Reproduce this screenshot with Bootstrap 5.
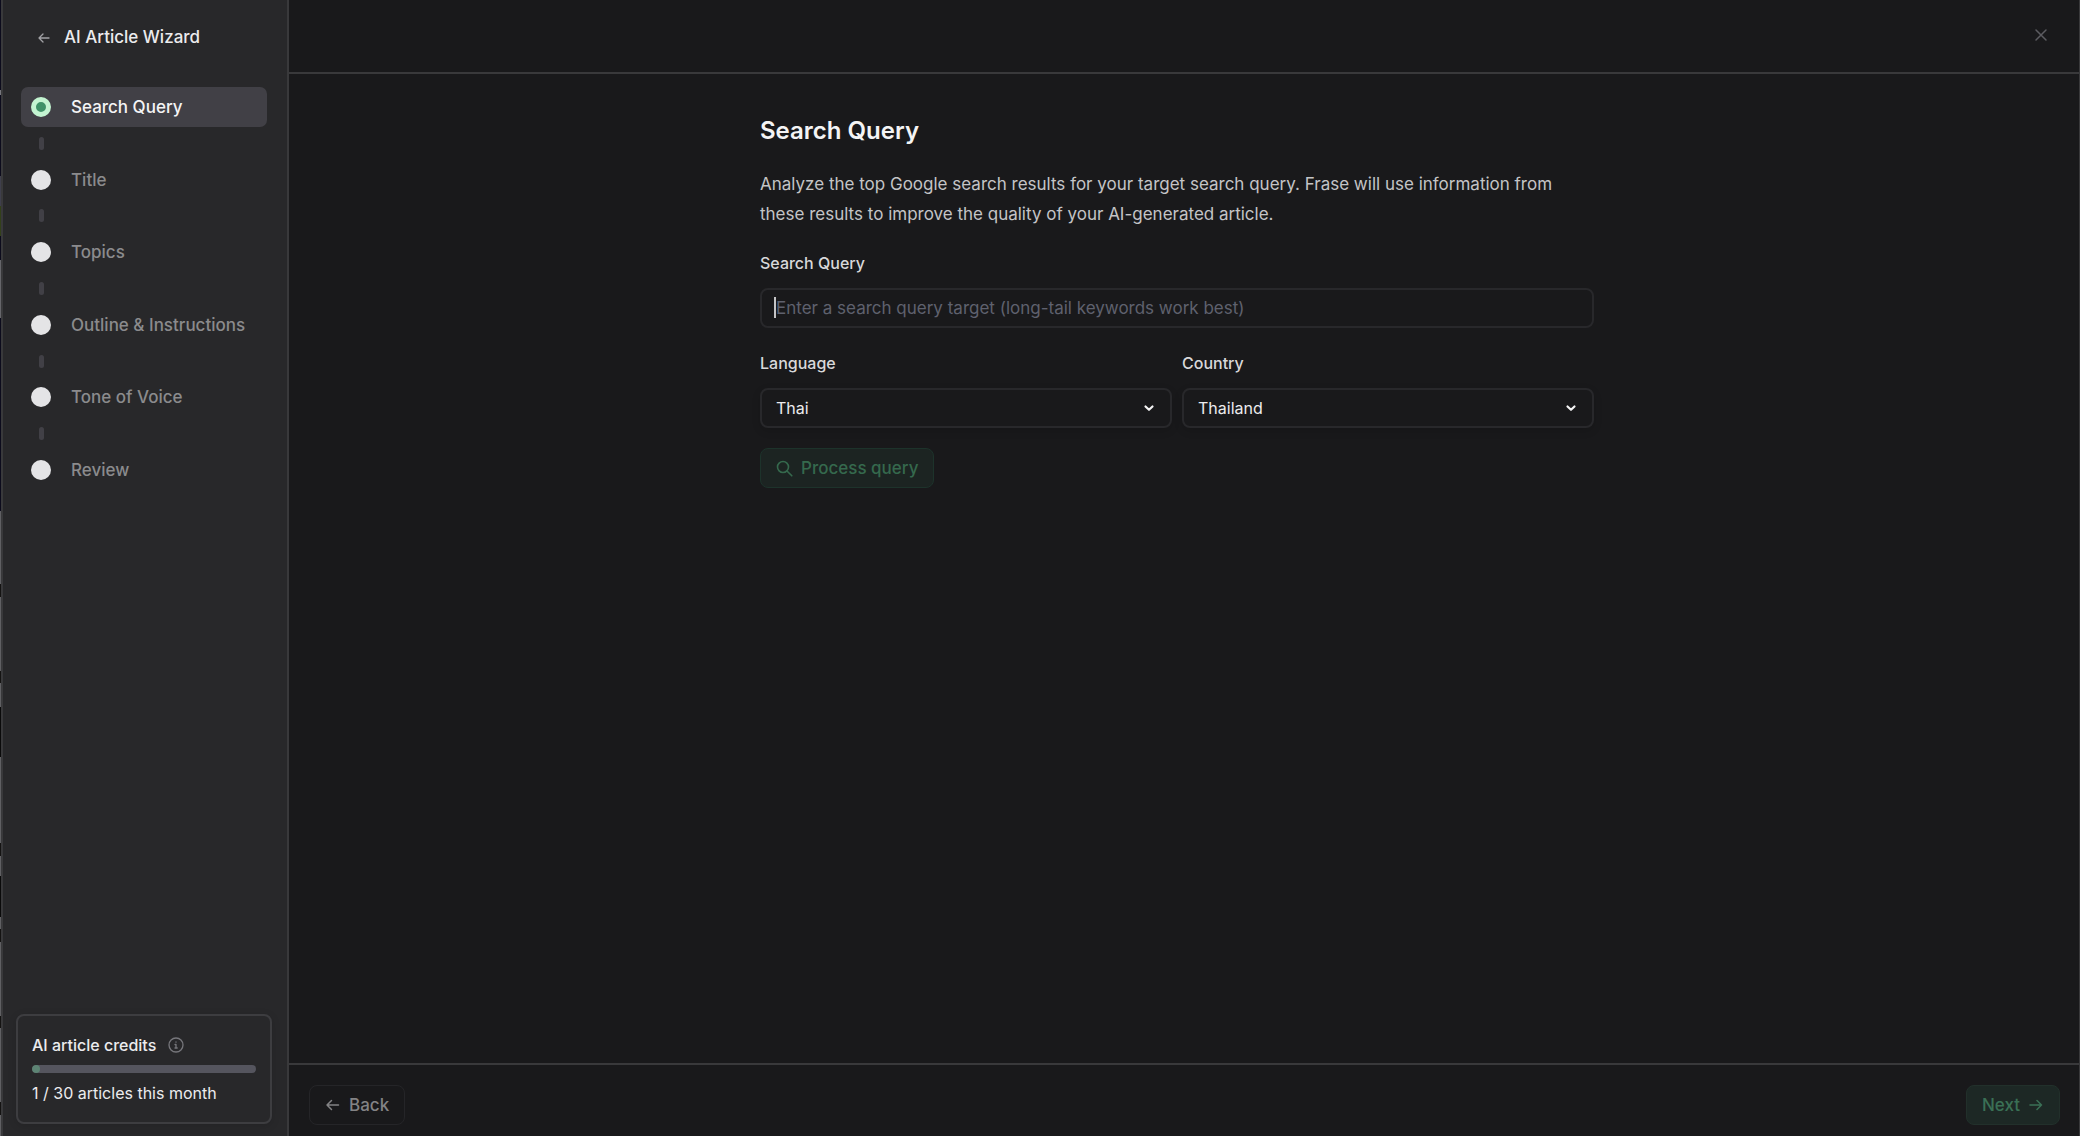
<!DOCTYPE html>
<html lang="en" data-bs-theme="dark">
<head>
<meta charset="utf-8">
<meta name="viewport" content="width=device-width, initial-scale=1">
<title>AI Article Wizard</title>
<link href="https://cdn.jsdelivr.net/npm/bootstrap@5.3.0/dist/css/bootstrap.min.css" rel="stylesheet">
<style>
  :root { --line: #39393b; --panel: #28282a; --page: #19191b; }
  body { font-family: Inter, "Liberation Sans", sans-serif; font-size: 17px; line-height: 30px; background: var(--page); color: #ececee; }
  svg { fill: none; stroke: currentColor; stroke-linecap: round; stroke-linejoin: round; flex: none; }
  .underlay { width: 1px; background: linear-gradient(#0c0b1c 0 90px, #77777c 90px 95px, #0c0b1c 95px 176px, #3f3f4c 176px 206px, #33401a 206px 236px, #0c0b1c 236px 260px, #66666a 260px 318px, #0c0b1c 318px 511px, #606063 511px 584px, #141312 584px 597px, #606063 597px 671px, #141312 671px 683px, #606063 683px 707px, #0a0a0a 707px 757px, #606063 757px 843px, #141312 843px 856px, #606063 856px 876px, #0a0a0a 876px 917px, #606063 917px 929px, #141312 929px 942px, #606063 942px 1016px, #141312 1016px 1028px, #606063 1028px 1102px, #141312 1102px 1115px, #606063 1115px); }
  .wizard { border: solid var(--line); border-width: 0 1px 0 2px; }
  .sidebar { width: 286px; background: var(--panel); border-right: 2px solid var(--line); }
  .wizard-title { gap: 12px; padding: 22px 32px 34px 33px; line-height: 31px; font-weight: 500; }
  .wizard-title a { display: flex; color: #a1a1a5; }
  .steps { height: 403px; margin: 0 20px 0 18px; }
  .steps a { gap: 20px; height: 40px; padding: 0 10px; border-radius: 7px; color: #8b8b8d; font-weight: 500; }
  .steps a.active { background: #414046; color: #f4f4f5; }
  .dot { width: 20px; height: 20px; border-radius: 50%; background: #e4e4e6; }
  .active .dot { background: #3f9268; border: 5px solid #c3f4d1; }
  .tick { width: 5px; height: 13px; margin-left: 18px; border-radius: 3px; background: #414046; }
  .credits { margin: 0 15px 12px 13px; padding: 13px 14px 13px; border: 2px solid #3d3d40; border-radius: 8px; font-size: 16px; line-height: 32px; box-shadow: 0 2px 8px #0002; }
  .credits svg { color: #77777c; }
  .credits .progress { height: 8px; border-radius: 4px; background: #55555e; margin: 4px 0; --bs-progress-bar-bg: #5d8474; }
  .credits .progress-bar { border-radius: 4px; min-width: 8px; }
  .topbar { height: 74px; border-bottom: 2px solid var(--line); padding: 0 28px 2px; }
  .topbar button { color: #5c5c61; background: none; border: 0; padding: 0; line-height: 1; }
  .bottombar { height: 73px; border-top: 2px solid var(--line); padding: 20px 19px 0 20px; }
  .workspace { padding: 0 14px 0 0; }
  .query-form { max-width: 834px; margin: 0 auto; padding-top: 39px; color: #c4c4c6; }
  .query-form h1 { font-size: 24px; line-height: 36px; font-weight: 600; color: #f4f4f5; margin-bottom: 20px; }
  .query-form p { margin-bottom: 21px; }
  .query-form label { font-size: 16px; line-height: 26px; font-weight: 500; color: #d8d8da; margin-bottom: 12px; }
  .query-form .form-control, .query-form .form-select { height: 40px; padding: 0 14px; border: 2px solid #28282b; border-radius: 8px; background-color: var(--page); box-shadow: none; color: #ececee; font-size: 16px; line-height: 36px; }
  .query-form .form-control { font-size: 17px; }
  .query-form .form-control::placeholder { color: #5f616e; }
  .caret { top: 9px; left: 14px; width: 2px; height: 21px; background: #c4c4c6; }
  .chevron { right: 17px; top: 14px; pointer-events: none; color: #f4f4f5; }
  .query-form .form-select { background-image: none; box-shadow: 0 3px 8px #0002; }
  .field { margin-bottom: 22px; }
  .selects { gap: 10px; margin-bottom: 20px; }
  .btn { --bs-btn-font-size: 17px; --bs-btn-line-height: 24px; --bs-btn-font-weight: 500; --bs-btn-border-width: 1px; --bs-btn-border-radius: 8px; --bs-btn-padding-x: 15px; --bs-btn-disabled-opacity: 1; height: 40px; }
  .btn-go { --bs-btn-disabled-color: #35694d; --bs-btn-disabled-bg: #1c2422; --bs-btn-disabled-border-color: #1d332b; }
  .btn-next { --bs-btn-disabled-color: #3a7055; --bs-btn-disabled-bg: #1d2825; --bs-btn-disabled-border-color: #22302b; }
  .btn-back { --bs-btn-disabled-color: #838385; --bs-btn-disabled-border-color: #252528; }
</style>
<script src="https://cdn.jsdelivr.net/npm/bootstrap@5.3.0/dist/js/bootstrap.bundle.min.js"></script>
</head>
<body>
<div class="d-flex vh-100">
  <div class="underlay"></div>
  <div class="wizard d-flex flex-grow-1">
    <aside class="sidebar d-flex flex-column flex-shrink-0">
      <div class="wizard-title d-flex align-items-center">
        <a href="#" aria-label="Back to documents"><svg width="16" height="16" viewBox="0 0 16 16" stroke-width="1.3"><path d="M13 8H3M7 4 3 8l4 4"/></svg></a>
        <span>AI Article Wizard</span>
      </div>
      <nav class="steps d-flex flex-column justify-content-between">
        <a href="#" class="active d-flex align-items-center text-decoration-none" aria-current="step"><span class="dot"></span>Search Query</a>
        <span class="tick"></span>
        <a href="#" class="d-flex align-items-center text-decoration-none"><span class="dot"></span>Title</a>
        <span class="tick"></span>
        <a href="#" class="d-flex align-items-center text-decoration-none"><span class="dot"></span>Topics</a>
        <span class="tick"></span>
        <a href="#" class="d-flex align-items-center text-decoration-none text-nowrap"><span class="dot"></span>Outline &amp; Instructions</a>
        <span class="tick"></span>
        <a href="#" class="d-flex align-items-center text-decoration-none"><span class="dot"></span>Tone of Voice</a>
        <span class="tick"></span>
        <a href="#" class="d-flex align-items-center text-decoration-none"><span class="dot"></span>Review</a>
      </nav>
      <section class="credits mt-auto">
        <div class="d-flex align-items-center gap-2 fw-medium"><span>AI article credits</span>
          <svg class="ms-1" width="16" height="16" viewBox="0 0 16 16" stroke-width="1.3"><circle cx="8" cy="8" r="7"/><path d="M7 7.5h1V11M7 11h2.2M8 5v.2"/></svg>
        </div>
        <div class="progress" role="progressbar" aria-label="Credits used" aria-valuenow="1" aria-valuemin="0" aria-valuemax="30"><div class="progress-bar" style="width:3.3%"></div></div>
        <div>1 / 30 articles this month</div>
      </section>
    </aside>
    <div class="d-flex flex-column flex-grow-1">
      <header class="topbar d-flex align-items-center justify-content-end">
        <button type="button" aria-label="Close"><svg width="20" height="20" viewBox="0 0 20 20" stroke-width="1.5"><path d="m5 5 10 10M15 5 5 15"/></svg></button>
      </header>
      <main class="workspace flex-grow-1">
        <form class="query-form">
          <h1>Search Query</h1>
          <p>Analyze the top Google search results for your target search query. Frase will use information from these results to improve the quality of your AI-generated article.</p>
          <div class="field">
            <label for="query" class="d-block">Search Query</label>
            <div class="position-relative">
              <input id="query" type="text" class="form-control" placeholder="Enter a search query target (long-tail keywords work best)">
              <span class="caret position-absolute"></span>
            </div>
          </div>
          <div class="selects d-flex">
            <div class="flex-fill w-50">
              <label for="language" class="d-block">Language</label>
              <div class="position-relative">
                <select id="language" class="form-select"><option>Thai</option></select>
                <svg class="chevron position-absolute" width="12" height="12" viewBox="0 0 12 12" stroke-width="2.2"><path d="m2.5 4.5 3.5 3.3 3.5-3.3"/></svg>
              </div>
            </div>
            <div class="flex-fill w-50">
              <label for="country" class="d-block">Country</label>
              <div class="position-relative">
                <select id="country" class="form-select"><option>Thailand</option></select>
                <svg class="chevron position-absolute" width="12" height="12" viewBox="0 0 12 12" stroke-width="2.2"><path d="m2.5 4.5 3.5 3.3 3.5-3.3"/></svg>
              </div>
            </div>
          </div>
          <button type="submit" class="btn btn-go d-inline-flex align-items-center gap-2" disabled><svg width="17" height="17" viewBox="0 0 17 17" stroke-width="1.6"><circle cx="7" cy="7" r="5.5"/><path d="m11 11 4.8 4.8"/></svg>Process query</button>
        </form>
      </main>
      <footer class="bottombar d-flex align-items-start justify-content-between">
        <button type="button" class="btn btn-back d-inline-flex align-items-center gap-2" disabled><svg width="16" height="16" viewBox="0 0 16 16" stroke-width="1.5"><path d="M13.5 8H2M6.5 3.5 2 8l4.5 4.5"/></svg>Back</button>
        <button type="button" class="btn btn-next d-inline-flex align-items-center gap-2" disabled>Next<svg width="16" height="16" viewBox="0 0 16 16" stroke-width="1.5"><path d="M2 8h11.5M9 3.5 13.5 8 9 12.5"/></svg></button>
      </footer>
    </div>
  </div>
</div>
</body>
</html>
